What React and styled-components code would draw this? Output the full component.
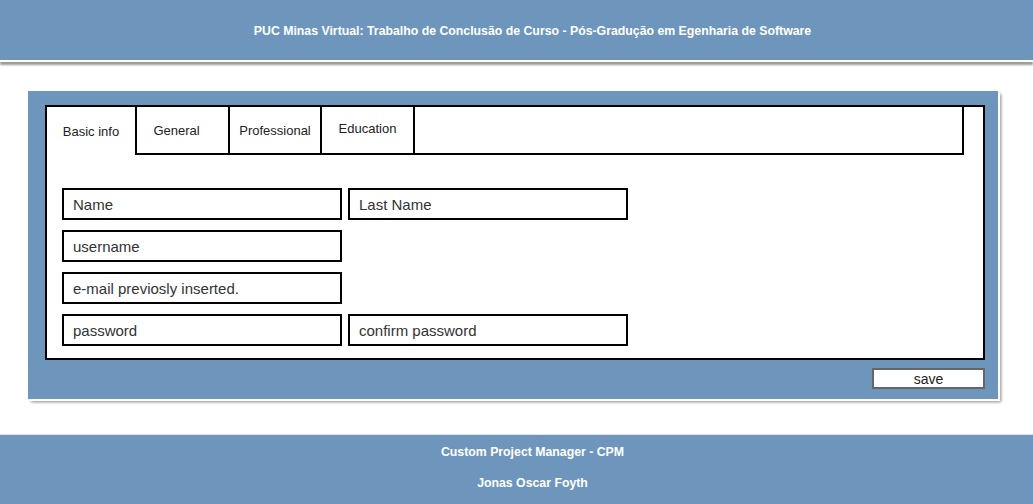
import React from 'react'
import styled, { createGlobalStyle } from 'styled-components'

const BLUE = '#6e96bd'

const GlobalStyle = createGlobalStyle`
  body {
    margin: 0;
    background: #fff;
    font-family: "Liberation Sans", Arial, sans-serif;
  }
`

const tabs = ['Basic info', 'General', 'Professional', 'Education']
const tabWidths = [90, 93, 92, 93]

const rows = [
  ['Name', 'Last Name'],
  ['username'],
  ['e-mail previosly inserted.'],
  ['password', 'confirm password'],
]

const App = () => {
  return (
    <Wrapper>
      <GlobalStyle />
      <Header>PUC Minas Virtual: Trabalho de Conclusão de Curso - Pós-Gradução em Egenharia de Software</Header>
      <Main>
        <Panel>
          <Card>
            <TabBar>
              {tabs.map((t, i) => (
                <Tab key={t} $active={i === 0} $w={tabWidths[i]} $lift={t === 'Education'} $shift={t === 'General'}>
                  {t}
                </Tab>
              ))}
              <TabFiller />
            </TabBar>
            <Form>
              {rows.map((r, i) => (
                <Row key={i}>
                  {r.map((f) => (
                    <Field key={f} placeholder={f} />
                  ))}
                </Row>
              ))}
            </Form>
          </Card>
          <Actions>
            <SaveButton>save</SaveButton>
          </Actions>
        </Panel>
      </Main>
      <Footer>
        <p>Custom Project Manager - CPM</p>
        <p>Jonas Oscar Foyth</p>
      </Footer>
    </Wrapper>
  )
}

const Wrapper = styled.div`
  width: 1033px;
  height: 504px;
  display: flex;
  flex-direction: column;
`

const Header = styled.header`
  height: 62px;
  background: ${BLUE};
  border-bottom: 2px solid #fff;
  box-shadow: 0 3px 2px #9a9a9a;
  color: #fff;
  font-size: 12.3px;
  font-weight: bold;
  display: flex;
  align-items: center;
  justify-content: center;
  padding: 2px 0 0 32px;
  box-sizing: border-box;
`

const Main = styled.main`
  padding: 29px 0 0 28px;
  flex: 1;
`

const Panel = styled.section`
  width: 970px;
  box-sizing: border-box;
  background: ${BLUE};
  padding: 14px 13px 10px 17px;
  box-shadow: 2px 2px 0 #fff, 3px 3px 3px #8a8a8a;
`

const Card = styled.div`
  border: 2px solid #000;
  background: #fff;
  height: 255px;
  box-sizing: border-box;
`

const TabBar = styled.div`
  display: flex;
  height: 48px;
  margin-right: 19px;
`

const Tab = styled.div`
  width: ${({ $w }) => $w}px;
  box-sizing: border-box;
  border-right: 2px solid #000;
  border-bottom: ${({ $active }) => ($active ? 'none' : '2px solid #000')};
  display: flex;
  align-items: center;
  justify-content: center;
  padding-bottom: ${({ $lift }) => ($lift ? '4px' : '0')};
  padding-right: ${({ $shift }) => ($shift ? '12px' : '0')};
  font-size: 13px;
  color: #222;
`

const TabFiller = styled.div`
  flex: 1;
  border-right: 2px solid #000;
  border-bottom: 2px solid #000;
`

const Form = styled.div`
  padding: 33px 0 0 15px;
  display: flex;
  flex-direction: column;
  gap: 10px;
`

const Row = styled.div`
  display: flex;
  gap: 6px;
`

const Field = styled.input`
  width: 280px;
  height: 32px;
  box-sizing: border-box;
  border: 2px solid #000;
  padding: 0 9px;
  font-family: "Liberation Sans", Arial, sans-serif;
  font-size: 15px;
  outline: none;
  &::placeholder {
    color: #333;
  }
`

const Actions = styled.div`
  display: flex;
  justify-content: flex-end;
  padding-top: 8px;
`

const SaveButton = styled.button`
  width: 113px;
  height: 21px;
  background: #fff;
  border: 2px solid #666;
  font-family: "Liberation Sans", Arial, sans-serif;
  font-size: 14px;
  color: #222;
  padding: 0;
`

const Footer = styled.footer`
  height: 70px;
  background: ${BLUE};
  border-top: 1px solid #dde4ec;
  color: #fff;
  font-size: 12.3px;
  font-weight: bold;
  display: flex;
  flex-direction: column;
  align-items: center;
  justify-content: flex-start;
  padding: 10px 0 0 32px;
  box-sizing: border-box;
  gap: 17px;
  p {
    margin: 0;
  }
`

export default App
